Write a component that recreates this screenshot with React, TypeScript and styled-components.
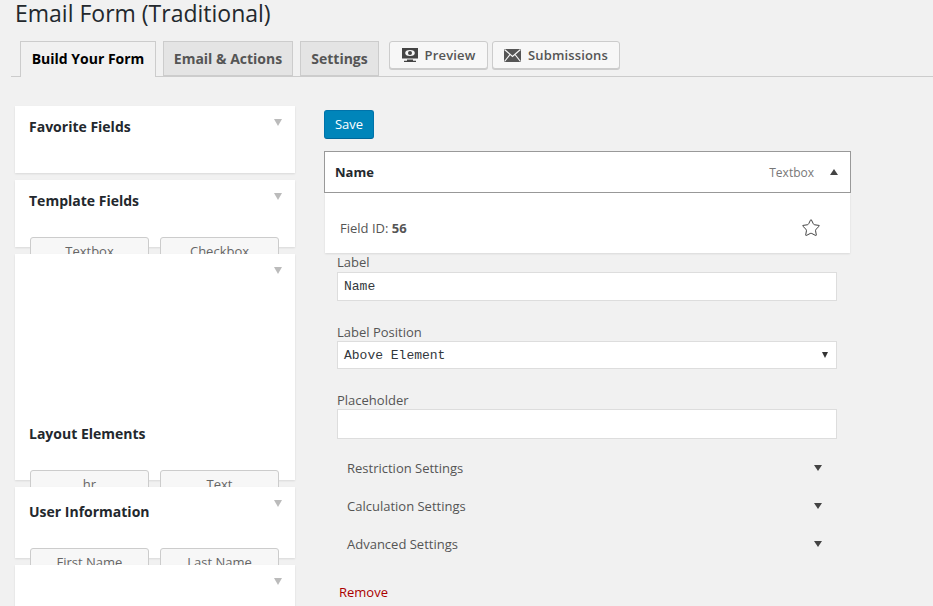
import { Star } from 'lucide-react'
import styled, { createGlobalStyle } from 'styled-components'

const GlobalStyle = createGlobalStyle`
  html, body {
    margin: 0;
    height: 606px;
    overflow: hidden;
    background: #f1f1f1;
    font-family: 'Open Sans', sans-serif;
    color: #444;
  }
`

const Page = styled.div`
  width: 933px;
  height: 606px;
  overflow: hidden;
`
const Title = styled.h1`
  margin: 0;
  padding: 0 0 0 15px;
  height: 41px;
  font-size: 23px;
  line-height: 26px;
  font-weight: 400;
  color: #23282d;
`
const TabBar = styled.div`
  display: flex;
  align-items: flex-start;
  height: 35px;
  margin-left: 11px;
  padding-left: 9px;
  border-bottom: 1px solid #ccc;
`
const Tab = styled.div<{ $active?: boolean; $width: number }>`
  box-sizing: border-box;
  width: ${p => p.$width}px;
  height: ${p => (p.$active ? 36 : 35)}px;
  margin-right: 7px;
  border: 1px solid #ccc;
  border-bottom: ${p => (p.$active ? 'none' : '1px solid #ccc')};
  background: ${p => (p.$active ? '#f1f1f1' : '#e4e4e4')};
  color: ${p => (p.$active ? '#000' : '#555')};
  font-size: 14px;
  font-weight: 700;
  line-height: 33px;
  text-align: center;
`
const TabButton = styled.div<{ $width: number; $gap: number }>`
  box-sizing: border-box;
  display: flex;
  align-items: center;
  justify-content: center;
  gap: 7px;
  width: ${p => p.$width}px;
  height: 28px;
  margin-left: ${p => p.$gap}px;
  border: 1px solid #ccc;
  border-radius: 3px;
  background: #f7f7f7;
  box-shadow: 0 1px 0 #ccc;
  color: #555;
  font-size: 13px;
  font-weight: 600;
  letter-spacing: 0.15px;
`
const Columns = styled.div`
  display: flex;
  padding: 29px 0 0 15px;
`
const Sidebar = styled.div`
  display: flex;
  flex-direction: column;
  gap: 7px;
  width: 280px;
  flex: none;
`
const Panel = styled.section<{ $height: number; $titleTop: number }>`
  position: relative;
  box-sizing: border-box;
  height: ${p => p.$height}px;
  padding-top: ${p => p.$titleTop}px;
  background: #fff;
  box-shadow: 0 1px 2px rgba(0, 0, 0, 0.1);
`
const PanelTitle = styled.h3`
  margin: 0;
  padding-left: 14px;
  height: 21px;
  font-size: 14px;
  line-height: 21px;
  font-weight: 700;
  color: #23282d;
`
const PanelArrow = styled.span`
  position: absolute;
  top: 13px;
  right: 13px;
  width: 0;
  height: 0;
  border-left: 4px solid transparent;
  border-right: 4px solid transparent;
  border-top: 7px solid #bbb;
`
const PanelButtons = styled.div`
  display: grid;
  grid-template-columns: 119px 119px;
  gap: 11px;
  padding: 26px 0 0 15px;
`
const FieldButton = styled.div`
  box-sizing: border-box;
  height: 28px;
  border: 1px solid #ccc;
  border-radius: 3px;
  background: #f7f7f7;
  color: #666;
  font-size: 13px;
  line-height: 26px;
  text-align: center;
`
const Editor = styled.div`
  width: 527px;
  margin-left: 29px;
  padding-top: 4px;
`
const SaveButton = styled.div`
  box-sizing: border-box;
  width: 50px;
  height: 29px;
  border: 1px solid #0073aa;
  border-bottom-color: #006799;
  border-radius: 3px;
  background: #0085ba;
  color: #fff;
  font-size: 13px;
  line-height: 26px;
  text-align: center;
`
const FieldHeader = styled.div`
  box-sizing: border-box;
  display: flex;
  align-items: center;
  height: 42px;
  margin-top: 12px;
  padding: 0 12px 0 10px;
  border: 1px solid #999;
  background: #fff;
`
const FieldName = styled.span`
  flex: 1;
  font-size: 13px;
  font-weight: 700;
  color: #23282d;
`
const FieldType = styled.span`
  margin-right: 16px;
  font-size: 12px;
  color: #777;
`
const UpArrow = styled.span`
  width: 0;
  height: 0;
  border-left: 4px solid transparent;
  border-right: 4px solid transparent;
  border-bottom: 6px solid #444;
`
const FieldBody = styled.div`
  box-sizing: border-box;
  display: flex;
  align-items: center;
  justify-content: space-between;
  height: 60px;
  margin: 0 1px;
  padding: 9px 29px 0 15px;
  background: #fff;
  box-shadow: 0 1px 2px rgba(0, 0, 0, 0.1);
  font-size: 13px;
  color: #555;
`
const FavoriteStar = styled(Star)`
  margin-top: 1px;
`
const Fields = styled.div`
  display: flex;
  flex-direction: column;
  padding: 0 14px 0 13px;
`
const FieldLabel = styled.label<{ $top: number; $height: number }>`
  display: block;
  height: ${p => p.$height}px;
  margin-top: ${p => p.$top}px;
  font-size: 13px;
  line-height: 18px;
  color: #555;
`
const TextBox = styled.div<{ $height: number }>`
  box-sizing: border-box;
  display: flex;
  align-items: center;
  justify-content: space-between;
  height: ${p => p.$height}px;
  padding: 0 8px 0 6px;
  border: 1px solid #ddd;
  background: #fff;
  font-family: 'Liberation Mono', monospace;
  font-size: 13px;
  color: #32373c;
`
const SelectArrow = styled.span`
  width: 0;
  height: 0;
  border-left: 3px solid transparent;
  border-right: 3px solid transparent;
  border-top: 6px solid #333;
`
const Settings = styled.div`
  padding: 10px 15px 0 10px;
`
const SettingRow = styled.div`
  display: flex;
  align-items: center;
  justify-content: space-between;
  height: 38px;
  font-size: 13px;
  color: #555;
`
const DownArrow = styled.span`
  width: 0;
  height: 0;
  border-left: 4px solid transparent;
  border-right: 4px solid transparent;
  border-top: 6px solid #444;
`
const RemoveLink = styled.a`
  margin: 20px 0 0 2px;
  font-size: 13px;
  line-height: 18px;
  color: #a00;
`

const panels = [
  { name: 'Favorite Fields', height: 67, titleTop: 10, buttons: [] },
  { name: 'Template Fields', height: 67, titleTop: 10, buttons: ['Textbox', 'Checkbox'] },
  { name: 'Layout Elements', height: 226, titleTop: 169, buttons: ['hr', 'Text'] },
  { name: 'User Information', height: 71, titleTop: 14, buttons: ['First Name', 'Last Name'] },
  { name: '', height: 60, titleTop: 0, buttons: [] },
]

const settingNames = ['Restriction Settings', 'Calculation Settings', 'Advanced Settings']

function PreviewIcon() {
  return (
    <svg width="16" height="16" viewBox="0 0 16 16">
      <path d="M0 1h16v10.500H0z" fill="#444" />
      <ellipse cx="8" cy="6" rx="4.800" ry="3" fill="#f7f7f7" />
      <circle cx="8" cy="6" r="2" fill="#444" />
      <path d="M5 12.500h6v1.200h3v1.300H2v-1.300h3z" fill="#444" />
    </svg>
  )
}

function MailIcon() {
  return (
    <svg width="17" height="13" viewBox="0 0 17 13">
      <path d="M0 0h17v13H0z" fill="#555" />
      <path d="M0.500 0.500 8.500 7.500 16.500 0.500M0.500 12.500 6 5.500M16.500 12.500 11 5.500" fill="none" stroke="#f7f7f7" strokeWidth="1.200" />
    </svg>
  )
}

export default function App() {
  return (
    <Page>
      <GlobalStyle />
      <Title>Email Form (Traditional)</Title>
      <TabBar>
        <Tab $active $width={136}>Build Your Form</Tab>
        <Tab $width={130}>Email &amp; Actions</Tab>
        <Tab $width={79}>Settings</Tab>
        <TabButton $width={99} $gap={3}><PreviewIcon />Preview</TabButton>
        <TabButton $width={128} $gap={4}><MailIcon />Submissions</TabButton>
      </TabBar>
      <Columns>
        <Sidebar>
          {panels.map((panel, i) => (
            <Panel key={i} $height={panel.height} $titleTop={panel.titleTop}>
              <PanelArrow />
              {panel.name && <PanelTitle>{panel.name}</PanelTitle>}
              {panel.buttons.length > 0 && (
                <PanelButtons>
                  {panel.buttons.map(b => <FieldButton key={b}>{b}</FieldButton>)}
                </PanelButtons>
              )}
            </Panel>
          ))}
        </Sidebar>
        <Editor>
          <SaveButton>Save</SaveButton>
          <FieldHeader>
            <FieldName>Name</FieldName>
            <FieldType>Textbox</FieldType>
            <UpArrow />
          </FieldHeader>
          <FieldBody>
            <span>Field ID: <b>56</b></span>
            <FavoriteStar size={20} strokeWidth={1.2} color="#444" />
          </FieldBody>
          <Fields>
            <FieldLabel $top={0} $height={19}>Label</FieldLabel>
            <TextBox $height={29}>Name</TextBox>
            <FieldLabel $top={22} $height={18}>Label Position</FieldLabel>
            <TextBox $height={28}>Above Element<SelectArrow /></TextBox>
            <FieldLabel $top={22} $height={18}>Placeholder</FieldLabel>
            <TextBox $height={30} />
            <Settings>
              {settingNames.map(s => (
                <SettingRow key={s}>{s}<DownArrow /></SettingRow>
              ))}
            </Settings>
            <RemoveLink>Remove</RemoveLink>
          </Fields>
        </Editor>
      </Columns>
    </Page>
  )
}
